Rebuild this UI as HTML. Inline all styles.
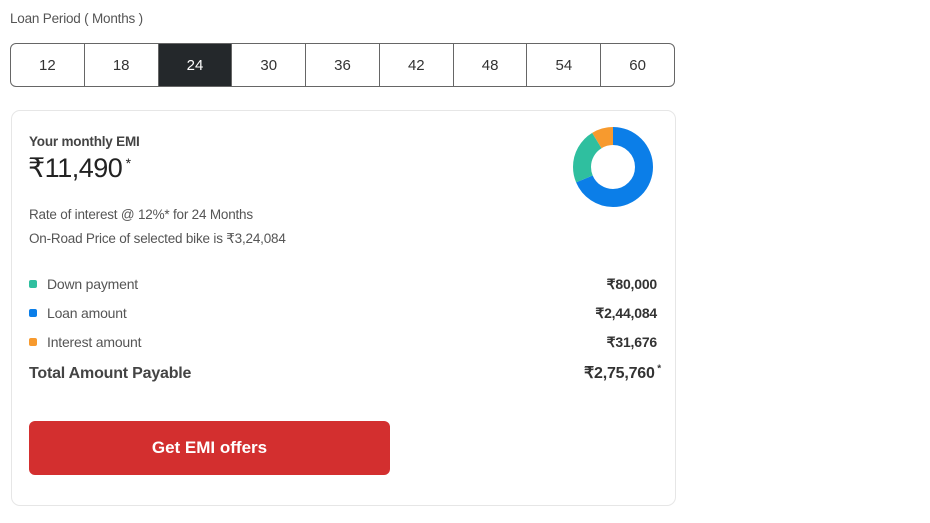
<!DOCTYPE html><html><head><style>
body{margin:0;width:930px;height:523px;background:#fff;font-family:"Liberation Sans",sans-serif;color:#333;position:relative;overflow:hidden}
.abs{position:absolute}
.lbl{left:10px;top:11px;font-size:13.5px;color:#555;letter-spacing:-0.2px}
.tabs{left:10px;top:43px;width:663px;height:42px;border:1px solid #666;border-radius:6px;display:flex;overflow:hidden}
.tabs div{flex:1;display:flex;align-items:center;justify-content:center;font-size:15px;color:#333;border-left:1px solid #666}
.tabs div:first-child{border-left:none}
.tabs .on{background:#24282b;color:#fff}
.card{left:11px;top:110px;width:663px;height:394px;border:1px solid #e6e6e6;border-radius:9px}
.t{font-size:13.5px;color:#555;letter-spacing:-0.2px}
.row{left:29px;width:628px;font-size:14px;color:#555;display:flex;justify-content:space-between;align-items:baseline;letter-spacing:-0.2px}
.row b{color:#333;font-size:14px}
.dot{display:inline-block;width:8px;height:8px;border-radius:2px;margin-right:10px;vertical-align:1px}
.btn{left:29px;top:421px;width:361px;height:54px;background:#d32f2f;border-radius:6px;color:#fff;font-weight:bold;font-size:17px;display:flex;align-items:center;justify-content:center}
</style></head><body>
<div class="abs lbl">Loan Period ( Months )</div>
<div class="abs tabs"><div>12</div><div>18</div><div class="on">24</div><div>30</div><div>36</div><div>42</div><div>48</div><div>54</div><div>60</div></div>
<div class="abs card"></div>
<div class="abs t" style="left:29px;top:134px;font-weight:bold;color:#444">Your monthly EMI</div>
<div class="abs" style="left:28px;top:153px;font-size:27px;color:#222;letter-spacing:-0.5px">₹11,490<sup style="font-size:14px;vertical-align:9px"> *</sup></div>
<div class="abs t" style="left:29px;top:207px">Rate of interest @ 12%* for 24 Months</div>
<div class="abs t" style="left:29px;top:231px">On-Road Price of selected bike is ₹3,24,084</div>
<svg class="abs" style="left:572px;top:126px" width="82" height="82" viewBox="0 0 82 82">
<g transform="rotate(-90 41 41)" fill="none" stroke-width="18">
<circle cx="41" cy="41" r="31" stroke="#0b7ee8" stroke-dasharray="133.6 200" />
<circle cx="41" cy="41" r="31" stroke="#2fbf9f" stroke-dasharray="0 133.6 43.9 200"/>
<circle cx="41" cy="41" r="31" stroke="#f79a2e" stroke-dasharray="0 177.5 17.3 200"/>
</g></svg>
<div class="abs row" style="top:276px"><span><i class="dot" style="background:#2fbf9f"></i>Down payment</span><b>₹80,000</b></div>
<div class="abs row" style="top:305px"><span><i class="dot" style="background:#0b7ee8"></i>Loan amount</span><b>₹2,44,084</b></div>
<div class="abs row" style="top:334px"><span><i class="dot" style="background:#f79a2e"></i>Interest amount</span><b>₹31,676</b></div>
<div class="abs row" style="top:363px;font-size:16px;font-weight:bold;color:#444;width:632px"><span>Total Amount Payable</span><b style="font-size:16px">₹2,75,760<sup style="font-size:10px"> *</sup></b></div>
<div class="abs btn">Get EMI offers</div>
</body></html>
